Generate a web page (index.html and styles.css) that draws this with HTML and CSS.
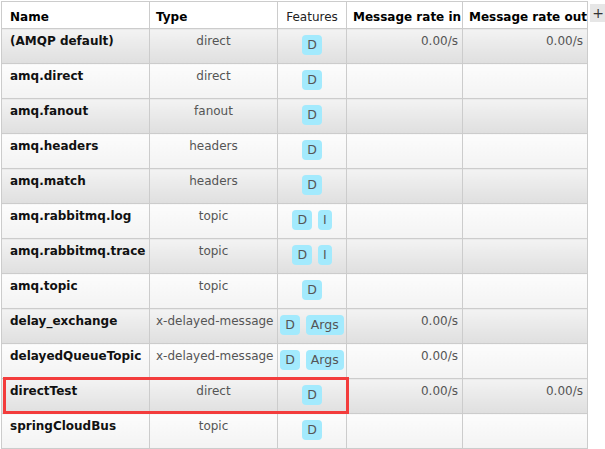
FILE: index.html
```html
<!DOCTYPE html>
<html lang="en">
<head>
  <meta charset="UTF-8" />
  <meta name="viewport" content="width=device-width, initial-scale=1.0" />
  <title>Exchanges</title>
  <link rel="stylesheet" href="styles.css">
</head>
<body>
  <div class="wrap">
    <table class="list">
      <colgroup>
        <col class="c-name">
        <col class="c-type">
        <col class="c-feat">
        <col class="c-in">
        <col class="c-out">
      </colgroup>
      <thead>
        <tr>
          <th>Name</th>
          <th>Type</th>
          <th class="feat-head">Features</th>
          <th>Message rate in</th>
          <th>Message rate out</th>
        </tr>
      </thead>
      <tbody>
        <tr class="alt1">
          <td class="name">(AMQP default)</td>
          <td class="type">direct</td>
          <td class="feat"><span class="tag">D</span></td>
          <td class="rate">0.00/s</td>
          <td class="rate">0.00/s</td>
        </tr>
        <tr class="alt2">
          <td class="name">amq.direct</td>
          <td class="type">direct</td>
          <td class="feat"><span class="tag">D</span></td>
          <td class="rate"></td>
          <td class="rate"></td>
        </tr>
        <tr class="alt1">
          <td class="name">amq.fanout</td>
          <td class="type">fanout</td>
          <td class="feat"><span class="tag">D</span></td>
          <td class="rate"></td>
          <td class="rate"></td>
        </tr>
        <tr class="alt2">
          <td class="name">amq.headers</td>
          <td class="type">headers</td>
          <td class="feat"><span class="tag">D</span></td>
          <td class="rate"></td>
          <td class="rate"></td>
        </tr>
        <tr class="alt1">
          <td class="name">amq.match</td>
          <td class="type">headers</td>
          <td class="feat"><span class="tag">D</span></td>
          <td class="rate"></td>
          <td class="rate"></td>
        </tr>
        <tr class="alt2">
          <td class="name">amq.rabbitmq.log</td>
          <td class="type">topic</td>
          <td class="feat"><span class="tag">D</span> <span class="tag">I</span></td>
          <td class="rate"></td>
          <td class="rate"></td>
        </tr>
        <tr class="alt1">
          <td class="name">amq.rabbitmq.trace</td>
          <td class="type">topic</td>
          <td class="feat"><span class="tag">D</span> <span class="tag">I</span></td>
          <td class="rate"></td>
          <td class="rate"></td>
        </tr>
        <tr class="alt2">
          <td class="name">amq.topic</td>
          <td class="type">topic</td>
          <td class="feat"><span class="tag">D</span></td>
          <td class="rate"></td>
          <td class="rate"></td>
        </tr>
        <tr class="alt1">
          <td class="name">delay_exchange</td>
          <td class="type">x-delayed-message</td>
          <td class="feat"><span class="tag">D</span> <span class="tag">Args</span></td>
          <td class="rate">0.00/s</td>
          <td class="rate"></td>
        </tr>
        <tr class="alt2">
          <td class="name">delayedQueueTopic</td>
          <td class="type">x-delayed-message</td>
          <td class="feat"><span class="tag">D</span> <span class="tag">Args</span></td>
          <td class="rate">0.00/s</td>
          <td class="rate"></td>
        </tr>
        <tr class="alt1">
          <td class="name">directTest</td>
          <td class="type">direct</td>
          <td class="feat"><span class="tag">D</span></td>
          <td class="rate">0.00/s</td>
          <td class="rate">0.00/s</td>
        </tr>
        <tr class="alt2">
          <td class="name">springCloudBus</td>
          <td class="type">topic</td>
          <td class="feat"><span class="tag">D</span></td>
          <td class="rate"></td>
          <td class="rate"></td>
        </tr>
      </tbody>
    </table>
    <div class="plus">+</div>
    <div class="highlight"></div>
  </div>
</body>
</html>
```

FILE: styles.css
```css
* {
  box-sizing: border-box;
}
body {
  margin: 0;
  padding: 1px 0 0 1px;
  font-family: "DejaVu Sans", Verdana, sans-serif;
  font-size: 12px;
  color: #484848;
  background: #fff;
  overflow: hidden;
}
.wrap {
  position: relative;
  display: flex;
  align-items: flex-start;
}
.list {
  border-collapse: collapse;
  table-layout: fixed;
  width: 586px;
  flex: none;
}
.c-name { width: 148px; }
.c-type { width: 128px; }
.c-feat { width: 69px; }
.c-in { width: 116px; }
.c-out { width: 125px; }
.list th,
.list td {
  border: 1px solid #ccc;
  line-height: 15px;
  white-space: nowrap;
  overflow: hidden;
}
.list th {
  height: 27px;
  padding: 4px 6px 0;
  text-align: left;
  color: #000;
  font-weight: bold;
  background: #fff;
}
.list th:first-child {
  padding-left: 8px;
}
.list th.feat-head {
  font-weight: normal;
  text-align: center;
  padding: 4px 0 0;
  color: #222;
}
.list td {
  height: 35px;
  padding: 5px 6px 0;
  vertical-align: top;
}
.list tr.alt1 td {
  background: linear-gradient(to bottom, #f3f3f3, #dfdfdf);
}
.list tr.alt2 td {
  background: linear-gradient(to bottom, #fcfcfc, #f3f3f3);
}
.list td.name {
  padding-left: 8px;
  font-weight: bold;
  color: #111;
}
.list td.type {
  text-align: center;
  color: #555;
}
.list td.feat {
  text-align: center;
  padding: 6px 0 0;
}
.list td.rate {
  text-align: right;
  padding-right: 4px;
  color: #555;
}
.tag {
  display: inline-block;
  padding: 2px 5px;
  margin: 0 1px;
  line-height: 16px;
  border-radius: 4px;
  background: #a3eafd;
  color: #555;
  font-size: 12.5px;
}
.plus {
  margin: 3px 0 0 2px;
  width: 16px;
  height: 18px;
  line-height: 18px;
  text-align: center;
  font-size: 14px;
  background: #e6e6e6;
  color: #333;
  flex: none;
}
.highlight {
  position: absolute;
  left: 2px;
  top: 376px;
  width: 346px;
  height: 37px;
  border: 3px solid #f33c3c;
}
```
